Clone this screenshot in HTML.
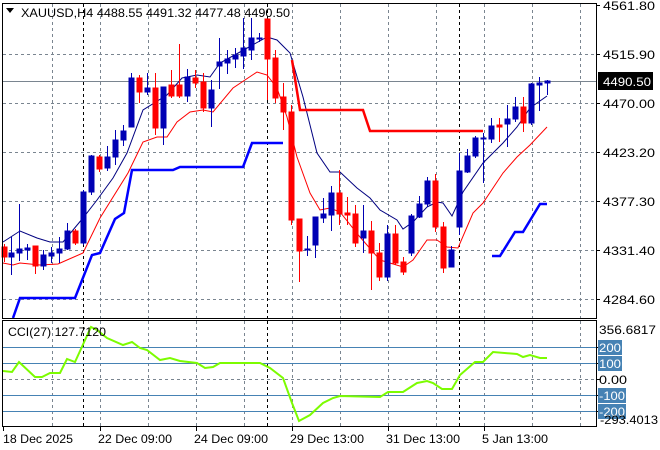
<!DOCTYPE html>
<html><head><meta charset="utf-8"><style>
html,body{margin:0;padding:0;background:#fff;width:660px;height:450px;overflow:hidden}
svg{display:block}
text{font-family:"Liberation Sans","DejaVu Sans",sans-serif;font-size:12px;fill:#000}
</style></head><body>
<svg width="660" height="450" viewBox="0 0 660 450" xmlns="http://www.w3.org/2000/svg">
<g stroke="#7a8590" stroke-width="1" stroke-dasharray="3,3" fill="none">
<path d="M3 54.5H596M3 103.5H596M3 152.5H596M3 201.5H596M3 250.5H596M3 299.5H596M3 379.5H596"/>
<path d="M52.5 4V318M100.5 4V318M148.5 4V318M196.5 4V318M244.5 4V318M292.5 4V318M340.5 4V318M388.5 4V318M436.5 4V318M484.5 4V318M532.5 4V318M580.5 4V318"/>
<path d="M52.5 321V426M100.5 321V426M148.5 321V426M196.5 321V426M244.5 321V426M292.5 321V426M340.5 321V426M388.5 321V426M436.5 321V426M484.5 321V426M532.5 321V426M580.5 321V426"/>
</g>
<g stroke="#000" stroke-dasharray="3,3" fill="none">
<path d="M83.5 4V318M267.5 4V318M459.5 4V318M83.5 321V426M267.5 321V426M459.5 321V426"/>
</g>
<path d="M3 81.5H596" stroke="#7a8590"/>
<g stroke="#4682b4"><path d="M3 347.5H596M3 363.5H596M3 395.5H596M3 411.5H596"/></g>
<polyline fill="none" stroke="#000080" stroke-width="1" points="3,242 20,231 37,238 50,242 63,242 83,218 97,200 113,178 127,153 143,110 167,95 182,78 197,75 210,77 220,63 240,52 267,37 277,40 290,53 303,97 317,153 330,172 340,172 357,188 370,198 380,210 397,220 403,229 413,222 427,207 437,202 443,203 452,216 463,192 483,163 503,143 517,127 530,108 547,96"/>
<polyline fill="none" stroke="#ff0000" stroke-width="1" points="3,263 13,265 20,263 40,265 58,264 67,260 83,253 100,218 128,173 143,142 157,137 167,137 177,122 190,112 203,110 213,112 233,88 257,72 267,75 277,88 287,117 297,157 310,193 320,210 330,208 340,212 360,237 380,260 403,267 413,260 427,240 437,240 447,247 458,248 473,213 483,203 503,173 517,157 530,145 547,127"/>
<polyline fill="none" stroke="#0000ff" stroke-width="2.5" points="13,318 20,298 75,298 92,255 100,253 115,219 124,213 132,170 173,170 180,167 243,167 252,143 283,143"/>
<polyline fill="none" stroke="#0000ff" stroke-width="2.5" points="492,256 500,256 515,232 523,232 540,204 547,204"/>
<polyline fill="none" stroke="#ff0000" stroke-width="2.5" points="292,60 300,110 363,110 370,131 483,131"/>
<g stroke-width="1">
<g stroke="#ff0000" fill="#ff0000">
<path d="M4.5 244V262M35.5 246V274M75.5 229V245M99.5 155V172M139.5 75V103M155.5 73V135M171.5 70V98M179.5 44V98M195.5 70V88M203.5 73V112M267.5 19V100M275.5 50V103M283.5 83V130M291.5 105V225M299.5 219V282M339.5 170V225M347.5 197V225M355.5 205V247M371.5 221V290M379.5 243V281M395.5 225V265M403.5 257V275M435.5 174V232M443.5 222V273M499.5 118V142M523.5 97V132"/>
<rect x="2" y="247" width="5" height="10"/><rect x="33" y="246" width="5" height="20"/><rect x="73" y="231" width="5" height="12"/><rect x="97" y="157" width="5" height="12"/><rect x="137" y="78" width="5" height="14"/><rect x="153" y="88" width="5" height="40"/><rect x="169" y="85" width="5" height="11"/><rect x="177" y="85" width="5" height="11"/><rect x="193" y="78" width="5" height="5"/><rect x="201" y="82" width="5" height="26"/><rect x="265" y="19" width="5" height="40"/><rect x="273" y="58" width="5" height="40"/><rect x="281" y="97" width="5" height="15"/><rect x="289" y="112" width="5" height="108"/><rect x="297" y="219" width="5" height="32"/><rect x="337" y="193" width="5" height="21"/><rect x="345" y="213" width="5" height="2"/><rect x="353" y="214" width="5" height="29"/><rect x="369" y="231" width="5" height="22"/><rect x="377" y="253" width="5" height="24"/><rect x="393" y="234" width="5" height="29"/><rect x="401" y="262" width="5" height="10"/><rect x="433" y="181" width="5" height="46"/><rect x="441" y="227" width="5" height="41"/><rect x="497" y="125" width="5" height="2"/><rect x="521" y="107" width="5" height="16"/>
</g>
<g stroke="#0000b4" fill="#0000b4">
<path d="M11.5 237V275M19.5 204V261M27.5 244V260M43.5 250V270M51.5 247V263M59.5 237V263M67.5 223V250M83.5 190V245M91.5 155V195M107.5 146V171M115.5 130V165M123.5 125V146M131.5 73V127M147.5 73V95M163.5 87V145M187.5 69V102M211.5 80V127M219.5 38V89M227.5 50V74M235.5 48V68M243.5 18V69M251.5 18V60M259.5 33V42M307.5 236V256M315.5 217V258M323.5 198V223M331.5 186V231M363.5 205V253M387.5 225V281M411.5 214V256M419.5 196V218M427.5 177V207M451.5 246V267M459.5 153V235M467.5 149V173M475.5 136V158M483.5 133V183M491.5 118V143M507.5 105V147M515.5 97V122M531.5 83V125M539.5 77V111M547.5 80V95"/>
<rect x="9" y="253" width="5" height="4"/><rect x="17" y="249" width="5" height="4"/><rect x="25" y="248" width="5" height="2"/><rect x="41" y="255" width="5" height="11"/><rect x="49" y="253" width="5" height="3"/><rect x="57" y="249" width="5" height="4"/><rect x="65" y="231" width="5" height="18"/><rect x="81" y="192" width="5" height="51"/><rect x="89" y="156" width="5" height="36"/><rect x="105" y="157" width="5" height="11"/><rect x="113" y="140" width="5" height="17"/><rect x="121" y="131" width="5" height="9"/><rect x="129" y="78" width="5" height="49"/><rect x="145" y="88" width="5" height="4"/><rect x="161" y="87" width="5" height="41"/><rect x="185" y="77" width="5" height="19"/><rect x="209" y="90" width="5" height="18"/><rect x="217" y="62" width="5" height="4"/><rect x="225" y="59" width="5" height="4"/><rect x="233" y="55" width="5" height="4"/><rect x="241" y="48" width="5" height="8"/><rect x="249" y="38" width="5" height="12"/><rect x="257" y="38" width="5" height="1"/><rect x="305" y="249" width="5" height="1"/><rect x="313" y="217" width="5" height="28"/><rect x="321" y="214" width="5" height="4"/><rect x="329" y="193" width="5" height="22"/><rect x="361" y="231" width="5" height="7"/><rect x="385" y="234" width="5" height="43"/><rect x="409" y="216" width="5" height="37"/><rect x="417" y="204" width="5" height="13"/><rect x="425" y="181" width="5" height="23"/><rect x="449" y="250" width="5" height="17"/><rect x="457" y="171" width="5" height="56"/><rect x="465" y="156" width="5" height="16"/><rect x="473" y="138" width="5" height="18"/><rect x="481" y="138" width="5" height="1"/><rect x="489" y="126" width="5" height="13"/><rect x="505" y="119" width="5" height="5"/><rect x="513" y="107" width="5" height="12"/><rect x="529" y="84" width="5" height="39"/><rect x="537" y="83" width="5" height="2"/><rect x="545" y="81" width="5" height="2"/>
</g>
</g>
<polyline fill="none" stroke="#7cfc00" stroke-width="2" points="3,371 12,372 19,362 35,377 42,377 50,373 60,373 67,359 75,362 91,327 97,330 107,338 123,345 132,342 140,348 147,350 160,360 170,358 180,361 197,363 205,368 213,367 220,363 260,363 270,368 283,378 292,403 299,421 310,415 323,403 333,398 340,396 380,397 388,392 403,392 417,383 427,381 433,383 442,389 452,389 460,375 475,362 483,362 493,352 517,354 523,357 530,355 540,358 547,358"/>
<g stroke="#000" fill="none">
<rect x="2.5" y="3.5" width="594" height="315"/>
<rect x="2.5" y="320.5" width="594" height="106"/>
<path d="M596 5.5H600M596 54.5H600M596 103.5H600M596 152.5H600M596 201.5H600M596 250.5H600M596 299.5H600M596 379.5H600M596 347.5H600M596 363.5H600M596 395.5H600M596 411.5H600"/>
<path d="M3.5 427V431M100.5 427V431M196.5 427V431M292.5 427V431M388.5 427V431M484.5 427V431"/>
</g>
<path d="M6 8H14L10 13Z" fill="#000"/>
<text x="21" y="17" textLength="269" lengthAdjust="spacingAndGlyphs">XAUUSD,H4  4488.55 4491.32 4477.48 4490.50</text>
<text x="8" y="336" textLength="98" lengthAdjust="spacingAndGlyphs">CCI(27) 127.7120</text>
<g>
<text x="603" y="10" textLength="52" lengthAdjust="spacingAndGlyphs">4561.80</text>
<text x="603" y="59" textLength="52" lengthAdjust="spacingAndGlyphs">4515.90</text>
<text x="603" y="108" textLength="52" lengthAdjust="spacingAndGlyphs">4470.00</text>
<text x="603" y="157" textLength="52" lengthAdjust="spacingAndGlyphs">4423.20</text>
<text x="603" y="206" textLength="52" lengthAdjust="spacingAndGlyphs">4377.30</text>
<text x="603" y="255" textLength="52" lengthAdjust="spacingAndGlyphs">4331.40</text>
<text x="603" y="304" textLength="52" lengthAdjust="spacingAndGlyphs">4284.60</text>
<rect x="598" y="72" width="55" height="18" fill="#000"/>
<text x="603" y="86" style="fill:#fff" textLength="48" lengthAdjust="spacingAndGlyphs">4490.50</text>
<text x="599" y="334" textLength="57" lengthAdjust="spacingAndGlyphs">356.6817</text>
<rect x="598" y="340" width="24" height="15" fill="#4682b4"/><text x="599" y="352" style="fill:#fff" textLength="22" lengthAdjust="spacingAndGlyphs">200</text>
<rect x="598" y="356" width="24" height="15" fill="#4682b4"/><text x="599" y="368" style="fill:#fff" textLength="22" lengthAdjust="spacingAndGlyphs">100</text>
<text x="599" y="384" textLength="28" lengthAdjust="spacingAndGlyphs">0.00</text>
<rect x="598" y="388" width="28" height="15" fill="#4682b4"/><text x="599" y="400" style="fill:#fff" textLength="26" lengthAdjust="spacingAndGlyphs">-100</text>
<rect x="598" y="404" width="28" height="15" fill="#4682b4"/><text x="599" y="416" style="fill:#fff" textLength="26" lengthAdjust="spacingAndGlyphs">-200</text>
<text x="600" y="424" textLength="58" lengthAdjust="spacingAndGlyphs">-293.4013</text>
<text x="3" y="443" textLength="70" lengthAdjust="spacingAndGlyphs">18 Dec 2025</text>
<text x="98" y="443" textLength="74" lengthAdjust="spacingAndGlyphs">22 Dec 09:00</text>
<text x="194" y="443" textLength="74" lengthAdjust="spacingAndGlyphs">24 Dec 09:00</text>
<text x="290" y="443" textLength="74" lengthAdjust="spacingAndGlyphs">29 Dec 13:00</text>
<text x="386" y="443" textLength="74" lengthAdjust="spacingAndGlyphs">31 Dec 13:00</text>
<text x="482" y="443" textLength="66" lengthAdjust="spacingAndGlyphs">5 Jan 13:00</text>
</g>
</svg>
</body></html>
